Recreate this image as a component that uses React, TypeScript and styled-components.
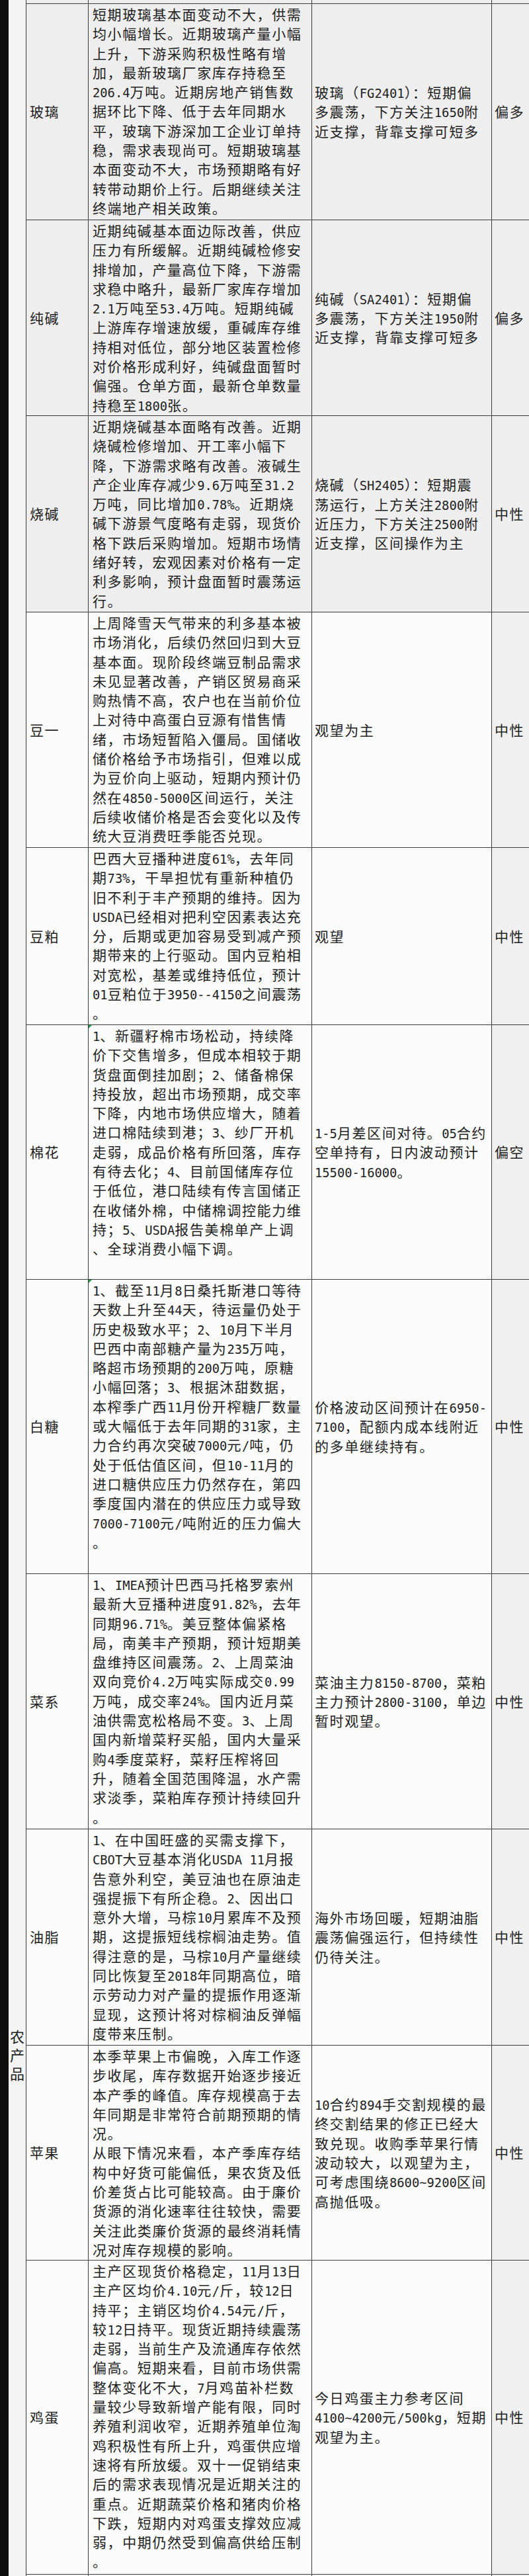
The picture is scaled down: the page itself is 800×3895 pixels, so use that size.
import React from "react";
import styled, { createGlobalStyle } from "styled-components";

const GlobalStyle = createGlobalStyle`
  html, body {
    margin: 0;
    padding: 0;
    background: #101010;
  }
  body {
    font-family: "Noto Sans CJK SC", sans-serif;
  }
`;

const Page = styled.div`
  display: flex;
  width: 800px;
  height: 3895px;
  overflow: hidden;
  background: #101010;
`;

const Edge = styled.div`
  width: 13px;
  flex: none;
  background: #0e0e0e;
`;

const CategoryColumn = styled.div`
  width: 27px;
  flex: none;
  box-sizing: border-box;
  border-right: 1px solid #3c3c3c;
  background: #f3f3f3;
  padding-top: 3064px;
  display: flex;
  flex-direction: column;
  align-items: center;
`;

const CategoryLabel = styled.div`
  font-family: "Noto Sans CJK SC", sans-serif;
  font-size: 22px;
  line-height: 28px;
  color: #222;
  white-space: pre-line;
  text-align: center;
`;

const Table = styled.div`
  flex: 1;
  display: flex;
  flex-direction: column;
`;

const Row = styled.div<{ $h: number }>`
  flex: none;
  display: grid;
  grid-template-columns: 94px 338px 272px 1fr;
  height: ${(p) => p.$h}px;
  box-sizing: border-box;
  border-bottom: 1px solid #3c3c3c;
`;

const Cell = styled.div<{ $bg: string; $last?: boolean }>`
  position: relative;
  box-sizing: border-box;
  background: ${(p) => p.$bg};
  border-right: ${(p) => (p.$last ? "none" : "1px solid #3c3c3c")};
  color: #1e1e1e;
  font-family: "Noto Sans CJK SC", sans-serif;
  font-size: 21px;
  letter-spacing: 1.6px;
  line-height: 29.3px;
  white-space: pre;
  overflow: hidden;
`;

const NameCell = styled(Cell)`
  display: flex;
  align-items: center;
  padding-left: 5px;
`;

const AnalysisCell = styled(Cell)<{ $flag?: boolean }>`
  padding: 1px 0 0 6px;
  &::before {
    content: "";
    display: ${(p) => (p.$flag ? "block" : "none")};
    position: absolute;
    left: 0;
    top: 0;
    width: 0;
    height: 0;
    border-top: 5px solid #1f9a3a;
    border-right: 5px solid transparent;
  }
`;

const StrategyCell = styled(Cell)`
  display: flex;
  align-items: center;
  padding-left: 4px;
`;

const RatingCell = styled(Cell)`
  display: flex;
  align-items: center;
  padding-left: 4px;
`;

const Latin = styled.span`
  font-family: "DejaVu Sans Mono", "Liberation Mono", monospace;
  font-size: 18.8px;
  line-height: 1;
  letter-spacing: 0;
`;

type Item = {
  name: string;
  analysis: string[];
  strategy: string[];
  rating: string;
  h: number;
  gray: boolean;
  flag?: boolean;
};

const items: Item[] = [
  {
    name: "玻璃",
    h: 327,
    gray: true,
    rating: "偏多",
    analysis: [
      "短期玻璃基本面变动不大，供需",
      "均小幅增长。近期玻璃产量小幅",
      "上升，下游采购积极性略有增",
      "加，最新玻璃厂家库存持稳至",
      "206.4万吨。近期房地产销售数",
      "据环比下降、低于去年同期水",
      "平，玻璃下游深加工企业订单持",
      "稳，需求表现尚可。短期玻璃基",
      "本面变动不大，市场预期略有好",
      "转带动期价上行。后期继续关注",
      "终端地产相关政策。",
    ],
    strategy: [
      "玻璃（FG2401）：短期偏",
      "多震荡，下方关注1650附",
      "近支撑，背靠支撑可短多",
    ],
  },
  {
    name: "纯碱",
    h: 296,
    gray: true,
    rating: "偏多",
    analysis: [
      "近期纯碱基本面边际改善，供应",
      "压力有所缓解。近期纯碱检修安",
      "排增加，产量高位下降，下游需",
      "求稳中略升，最新厂家库存增加",
      "2.1万吨至53.4万吨。短期纯碱",
      "上游库存增速放缓，重碱库存维",
      "持相对低位，部分地区装置检修",
      "对价格形成利好，纯碱盘面暂时",
      "偏强。仓单方面，最新仓单数量",
      "持稳至1800张。",
    ],
    strategy: [
      "纯碱（SA2401）：短期偏",
      "多震荡，下方关注1950附",
      "近支撑，背靠支撑可短多",
    ],
  },
  {
    name: "烧碱",
    h: 297,
    gray: true,
    rating: "中性",
    analysis: [
      "近期烧碱基本面略有改善。近期",
      "烧碱检修增加、开工率小幅下",
      "降，下游需求略有改善。液碱生",
      "产企业库存减少9.6万吨至31.2",
      "万吨，同比增加0.78%。近期烧",
      "碱下游景气度略有走弱，现货价",
      "格下跌后采购增加。短期市场情",
      "绪好转，宏观因素对价格有一定",
      "利多影响，预计盘面暂时震荡运",
      "行。",
    ],
    strategy: [
      "烧碱（SH2405）：短期震",
      "荡运行，上方关注2800附",
      "近压力，下方关注2500附",
      "近支撑，区间操作为主",
    ],
  },
  {
    name: "豆一",
    h: 356,
    gray: false,
    rating: "中性",
    analysis: [
      "上周降雪天气带来的利多基本被",
      "市场消化，后续仍然回归到大豆",
      "基本面。现阶段终端豆制品需求",
      "未见显著改善，产销区贸易商采",
      "购热情不高，农户也在当前价位",
      "上对待中高蛋白豆源有惜售情",
      "绪，市场短暂陷入僵局。国储收",
      "储价格给予市场指引，但难以成",
      "为豆价向上驱动，短期内预计仍",
      "然在4850-5000区间运行，关注",
      "后续收储价格是否会变化以及传",
      "统大豆消费旺季能否兑现。",
    ],
    strategy: ["观望为主"],
  },
  {
    name: "豆粕",
    h: 268,
    gray: false,
    rating: "中性",
    analysis: [
      "巴西大豆播种进度61%，去年同",
      "期73%，干旱担忧有重新种植仍",
      "旧不利于丰产预期的维持。因为",
      "USDA已经相对把利空因素表达充",
      "分，后期或更加容易受到减产预",
      "期带来的上行驱动。国内豆粕相",
      "对宽松，基差或维持低位，预计",
      "01豆粕位于3950--4150之间震荡",
      "。",
    ],
    strategy: ["观望"],
  },
  {
    name: "棉花",
    h: 385,
    gray: false,
    rating: "偏空",
    flag: true,
    analysis: [
      "1、新疆籽棉市场松动，持续降",
      "价下交售增多，但成本相较于期",
      "货盘面倒挂加剧；2、储备棉保",
      "持投放，超出市场预期，成交率",
      "下降，内地市场供应增大，随着",
      "进口棉陆续到港；3、纱厂开机",
      "走弱，成品价格有所回落，库存",
      "有待去化；4、目前国储库存位",
      "于低位，港口陆续有传言国储正",
      "在收储外棉，中储棉调控能力维",
      "持；5、USDA报告美棉单产上调",
      "、全球消费小幅下调。",
    ],
    strategy: [
      "1-5月差区间对待。05合约",
      "空单持有，日内波动预计",
      "15500-16000。",
    ],
  },
  {
    name: "白糖",
    h: 445,
    gray: false,
    rating: "中性",
    flag: true,
    analysis: [
      "1、截至11月8日桑托斯港口等待",
      "天数上升至44天，待运量仍处于",
      "历史极致水平；2、10月下半月",
      "巴西中南部糖产量为235万吨，",
      "略超市场预期的200万吨，原糖",
      "小幅回落；3、根据沐甜数据，",
      "本榨季广西11月份开榨糖厂数量",
      "或大幅低于去年同期的31家，主",
      "力合约再次突破7000元/吨，仍",
      "处于低估值区间，但10-11月的",
      "进口糖供应压力仍然存在，第四",
      "季度国内潜在的供应压力或导致",
      "7000-7100元/吨附近的压力偏大",
      "。",
    ],
    strategy: [
      "价格波动区间预计在6950-",
      "7100，配额内成本线附近",
      "的多单继续持有。",
    ],
  },
  {
    name: "菜系",
    h: 386,
    gray: false,
    rating: "中性",
    analysis: [
      "1、IMEA预计巴西马托格罗索州",
      "最新大豆播种进度91.82%，去年",
      "同期96.71%。美豆整体偏紧格",
      "局，南美丰产预期，预计短期美",
      "盘维持区间震荡。2、上周菜油",
      "双向竞价4.2万吨实际成交0.99",
      "万吨，成交率24%。国内近月菜",
      "油供需宽松格局不变。3、上周",
      "国内新增菜籽买船，国内大量采",
      "购4季度菜籽，菜籽压榨将回",
      "升，随着全国范围降温，水产需",
      "求淡季，菜粕库存预计持续回升",
      "。",
    ],
    strategy: [
      "菜油主力8150-8700，菜粕",
      "主力预计2800-3100，单边",
      "暂时观望。",
    ],
  },
  {
    name: "油脂",
    h: 327,
    gray: false,
    rating: "中性",
    analysis: [
      "1、在中国旺盛的买需支撑下，",
      "CBOT大豆基本消化USDA 11月报",
      "告意外利空，美豆油也在原油走",
      "强提振下有所企稳。2、因出口",
      "意外大增，马棕10月累库不及预",
      "期，这提振短线棕榈油走势。值",
      "得注意的是，马棕10月产量继续",
      "同比恢复至2018年同期高位，暗",
      "示劳动力对产量的提振作用逐渐",
      "显现，这预计将对棕榈油反弹幅",
      "度带来压制。",
    ],
    strategy: [
      "海外市场回暖，短期油脂",
      "震荡偏强运行，但持续性",
      "仍待关注。",
    ],
  },
  {
    name: "苹果",
    h: 325,
    gray: false,
    rating: "中性",
    analysis: [
      "本季苹果上市偏晚，入库工作逐",
      "步收尾，库存数据开始逐步接近",
      "本产季的峰值。库存规模高于去",
      "年同期是非常符合前期预期的情",
      "况。",
      "从眼下情况来看，本产季库存结",
      "构中好货可能偏低，果农货及低",
      "价差货占比可能较高。由于廉价",
      "货源的消化速率往往较快，需要",
      "关注此类廉价货源的最终消耗情",
      "况对库存规模的影响。",
    ],
    strategy: [
      "10合约894手交割规模的最",
      "终交割结果的修正已经大",
      "致兑现。收购季苹果行情",
      "波动较大，以观望为主，",
      "可考虑围绕8600~9200区间",
      "高抛低吸。",
    ],
  },
  {
    name: "鸡蛋",
    h: 475,
    gray: false,
    rating: "中性",
    analysis: [
      "主产区现货价格稳定，11月13日",
      "主产区均价4.10元/斤，较12日",
      "持平；主销区均价4.54元/斤，",
      "较12日持平。现货近期持续震荡",
      "走弱，当前生产及流通库存依然",
      "偏高。短期来看，目前市场供需",
      "整体变化不大，7月鸡苗补栏数",
      "量较少导致新增产能有限，同时",
      "养殖利润收窄，近期养殖单位淘",
      "鸡积极性有所上升，鸡蛋供应增",
      "速将有所放缓。双十一促销结束",
      "后的需求表现情况是近期关注的",
      "重点。近期蔬菜价格和猪肉价格",
      "下跌，短期内对鸡蛋支撑效应减",
      "弱，中期仍然受到偏高供给压制",
      "。",
    ],
    strategy: [
      "今日鸡蛋主力参考区间",
      "4100~4200元/500kg，短期",
      "观望为主。",
    ],
  },
];

const GRAY = "#eeeeee";
const WHITE = "#fbfbfb";
const RATING_BG = "#f0f0f0";

function MixedText({ lines }: { lines: string[] }) {
  return (
    <>
      {lines.map((line, li) => (
        <React.Fragment key={li}>
          {li > 0 ? "\n" : null}
          {line.split(/([\x20-\x7E]+)/).map((part, pi) =>
            pi % 2 === 1 ? <Latin key={pi}>{part}</Latin> : part
          )}
        </React.Fragment>
      ))}
    </>
  );
}

function DataRow({ item }: { item: Item }) {
  const main = item.gray ? GRAY : WHITE;
  const side = item.gray ? GRAY : RATING_BG;
  return (
    <Row $h={item.h}>
      <NameCell $bg={main}>{item.name}</NameCell>
      <AnalysisCell $bg={main} $flag={item.flag}>
        <MixedText lines={item.analysis} />
      </AnalysisCell>
      <StrategyCell $bg={main}>
        <div>
          <MixedText lines={item.strategy} />
        </div>
      </StrategyCell>
      <RatingCell $bg={side} $last>
        {item.rating}
      </RatingCell>
    </Row>
  );
}

function BlankRow({ h, gray }: { h: number; gray: boolean }) {
  const main = gray ? GRAY : WHITE;
  const side = gray ? GRAY : RATING_BG;
  return (
    <Row $h={h}>
      <NameCell $bg={main} />
      <AnalysisCell $bg={main} />
      <StrategyCell $bg={main} />
      <RatingCell $bg={side} $last />
    </Row>
  );
}

export default function App() {
  return (
    <>
      <GlobalStyle />
      <Page>
        <Edge />
        <CategoryColumn>
          <CategoryLabel>{"农\n产\n品"}</CategoryLabel>
        </CategoryColumn>
        <Table>
          <BlankRow h={6} gray />
          {items.map((it) => (
            <DataRow key={it.name} item={it} />
          ))}
          <BlankRow h={40} gray={false} />
        </Table>
      </Page>
    </>
  );
}
